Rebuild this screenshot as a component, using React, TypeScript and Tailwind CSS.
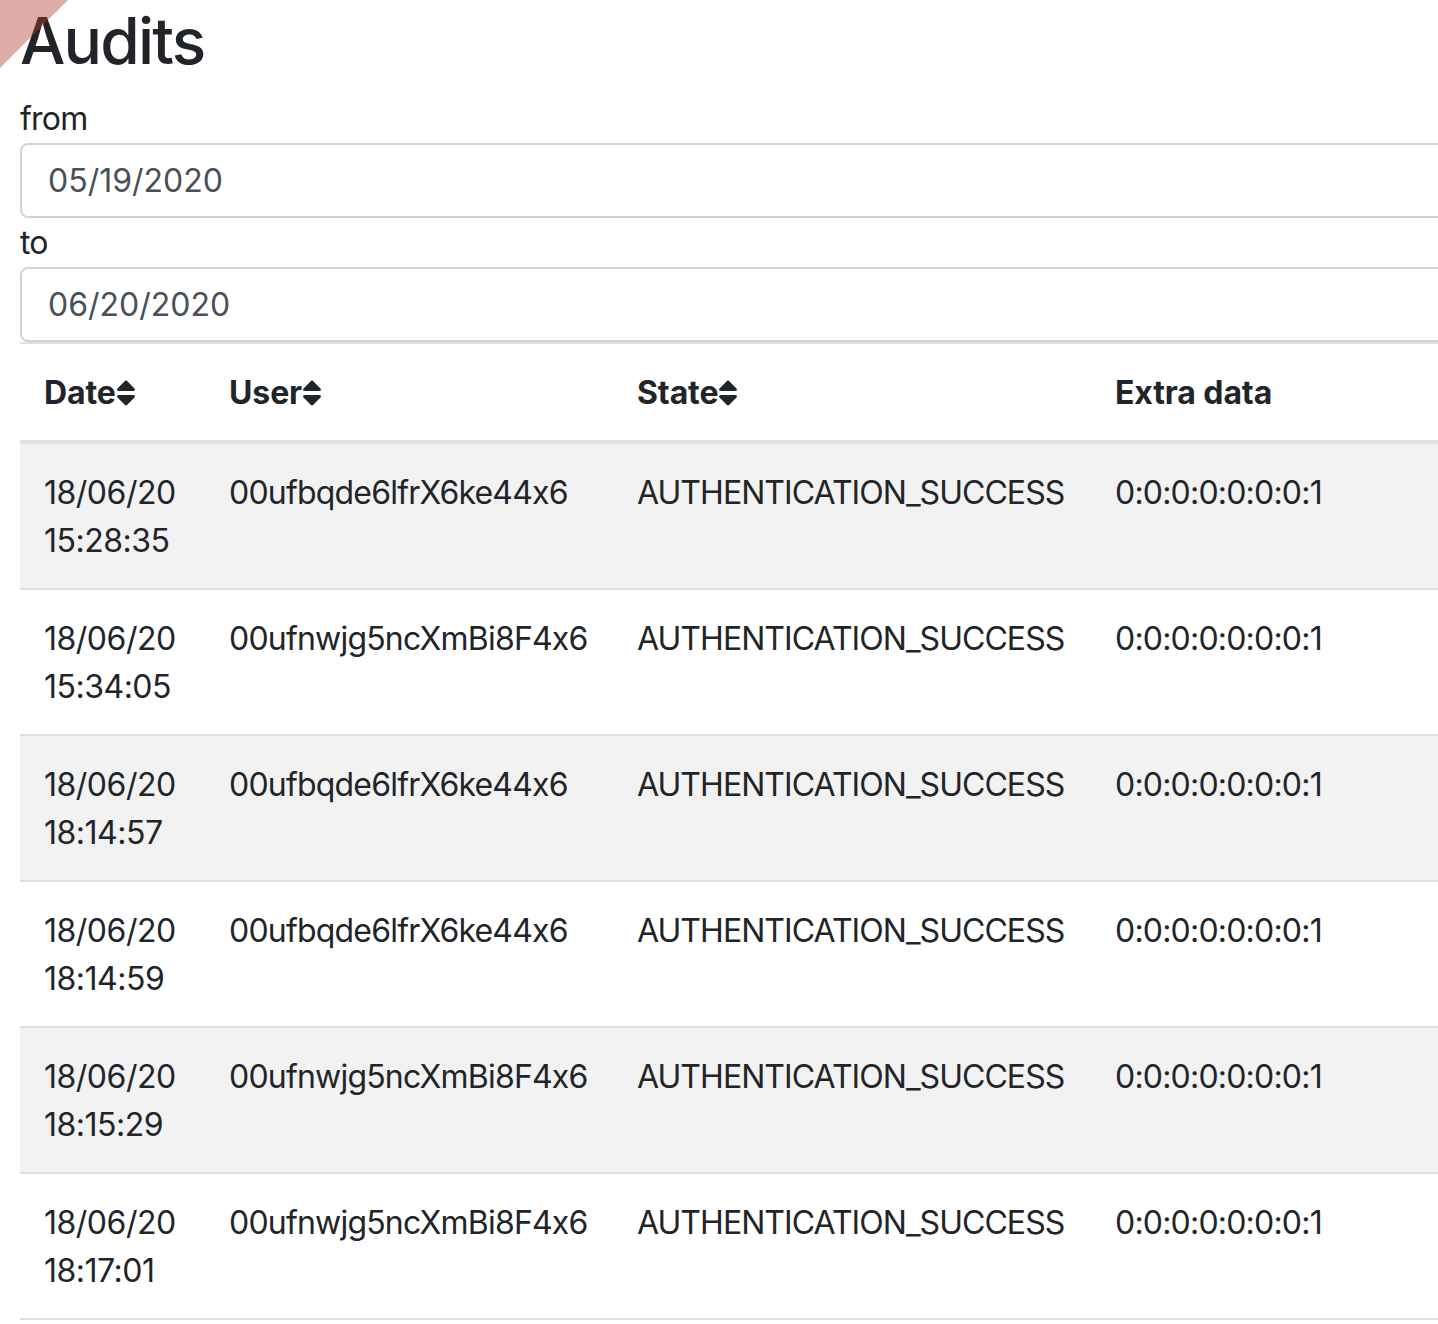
import React from 'react';
import { FaSort } from 'react-icons/fa';

type Audit = {
  date: string;
  time: string;
  user: string;
  state: string;
  extra: string;
};

const audits: Audit[] = [
  { date: '18/06/20', time: '15:28:35', user: '00ufbqde6lfrX6ke44x6', state: 'AUTHENTICATION_SUCCESS', extra: '0:0:0:0:0:0:0:1' },
  { date: '18/06/20', time: '15:34:05', user: '00ufnwjg5ncXmBi8F4x6', state: 'AUTHENTICATION_SUCCESS', extra: '0:0:0:0:0:0:0:1' },
  { date: '18/06/20', time: '18:14:57', user: '00ufbqde6lfrX6ke44x6', state: 'AUTHENTICATION_SUCCESS', extra: '0:0:0:0:0:0:0:1' },
  { date: '18/06/20', time: '18:14:59', user: '00ufbqde6lfrX6ke44x6', state: 'AUTHENTICATION_SUCCESS', extra: '0:0:0:0:0:0:0:1' },
  { date: '18/06/20', time: '18:15:29', user: '00ufnwjg5ncXmBi8F4x6', state: 'AUTHENTICATION_SUCCESS', extra: '0:0:0:0:0:0:0:1' },
  { date: '18/06/20', time: '18:17:01', user: '00ufnwjg5ncXmBi8F4x6', state: 'AUTHENTICATION_SUCCESS', extra: '0:0:0:0:0:0:0:1' },
];

const SortHeader: React.FC<{ label: string; sortable?: boolean }> = ({ label, sortable = true }) => (
  <th className="px-[24px] pt-[25px] pb-[23px] text-left font-bold tracking-[-0.1px] border-t-2 border-b-4 border-[#dee2e6] align-bottom">
    <span className="inline-flex items-center">
      {label}
      {sortable && <FaSort className="w-[20px] h-[32px]" />}
    </span>
  </th>
);

const cell = 'px-[24px] pt-[25px] pb-[23px] border-t-2 border-[#dee2e6] align-top';

const App: React.FC = () => {
  return (
    <div
      className="relative min-h-screen w-full overflow-hidden bg-white text-[#212529] text-[32px] leading-[48px] tracking-[-0.8px]"
      style={{ fontFamily: 'Inter, "Noto Sans", sans-serif', fontFeatureSettings: '"calt" 0' }}
    >
      {/* corner ribbon */}
      <svg className="absolute top-0 left-0 z-10 w-[68px] h-[68px]" viewBox="0 0 68 68">
        <polygon points="0,0 68,0 0,68" fill="rgba(180,54,45,0.42)" />
      </svg>

      <div className="pl-[20px] w-[1480px]">
        <h2 className="mt-[2px] mb-[16px] text-[64px] leading-[77px] font-medium tracking-[-1.8px]">Audits</h2>

        <label className="block leading-[48px]">from</label>
        <div className="h-[75px] border-2 border-[#ced4da] rounded-[8px] px-[26px] flex items-center text-[#495057] tracking-[0px]">
          05/19/2020
        </div>
        <label className="block leading-[49px]">to</label>
        <div className="h-[75px] border-2 border-[#ced4da] rounded-[8px] px-[26px] flex items-center text-[#495057] tracking-[0px]">
          06/20/2020
        </div>

        <table className="w-full table-fixed border-collapse">
          <colgroup>
            <col className="w-[185px]" />
            <col className="w-[408px]" />
            <col className="w-[478px]" />
            <col />
          </colgroup>
          <thead>
            <tr>
              <SortHeader label="Date" />
              <SortHeader label="User" />
              <SortHeader label="State" />
              <SortHeader label="Extra data" sortable={false} />
            </tr>
          </thead>
          <tbody className="border-b-2 border-[#dee2e6]">
            {audits.map((a, i) => (
              <tr key={i} className={i % 2 === 0 ? 'bg-[#f2f2f2]' : 'bg-white'}>
                <td className={`${cell} tracking-[-0.5px]`}>
                  {a.date}
                  <br />
                  {a.time}
                </td>
                <td className={cell}>{a.user}</td>
                <td className={`${cell} tracking-[-0.95px]`}>{a.state}</td>
                <td className={cell}>{a.extra}</td>
              </tr>
            ))}
          </tbody>
        </table>
      </div>
    </div>
  );
};

export default App;
